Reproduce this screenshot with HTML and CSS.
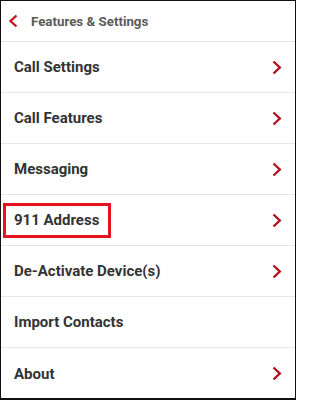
FILE: index.html
```html
<!DOCTYPE html>
<html>
<head>
<meta charset="utf-8">
<link rel="stylesheet" href="styles.css">
</head>
<body>
<div class="screen">
  <header class="header">
    <svg class="back" width="10" height="14" viewBox="0 0 10 14"><path d="M8.5 1.5 L2.5 7 L8.5 12.5" fill="none" stroke="#c0141e" stroke-width="2.3"/></svg>
    <span class="title">Features &amp; Settings</span>
  </header>
  <ul class="list">
    <li class="row"><span class="label">Call Settings</span><svg class="chev" width="10" height="15" viewBox="0 0 10 15"><path d="M1.5 1.5 L7.8 7.5 L1.5 13.5" fill="none" stroke="#b3121b" stroke-width="2.4"/></svg></li>
    <li class="row"><span class="label">Call Features</span><svg class="chev" width="10" height="15" viewBox="0 0 10 15"><path d="M1.5 1.5 L7.8 7.5 L1.5 13.5" fill="none" stroke="#b3121b" stroke-width="2.4"/></svg></li>
    <li class="row"><span class="label">Messaging</span><svg class="chev" width="10" height="15" viewBox="0 0 10 15"><path d="M1.5 1.5 L7.8 7.5 L1.5 13.5" fill="none" stroke="#b3121b" stroke-width="2.4"/></svg></li>
    <li class="row"><span class="label">911 Address</span><span class="box"></span><svg class="chev" width="10" height="15" viewBox="0 0 10 15"><path d="M1.5 1.5 L7.8 7.5 L1.5 13.5" fill="none" stroke="#b3121b" stroke-width="2.4"/></svg></li>
    <li class="row"><span class="label">De-Activate Device(s)</span><svg class="chev" width="10" height="15" viewBox="0 0 10 15"><path d="M1.5 1.5 L7.8 7.5 L1.5 13.5" fill="none" stroke="#b3121b" stroke-width="2.4"/></svg></li>
    <li class="row"><span class="label">Import Contacts</span></li>
    <li class="row last"><span class="label">About</span><svg class="chev" width="10" height="15" viewBox="0 0 10 15"><path d="M1.5 1.5 L7.8 7.5 L1.5 13.5" fill="none" stroke="#b3121b" stroke-width="2.4"/></svg></li>
  </ul>
</div>
</body>
</html>
```
FILE: styles.css
```css
html, body {
  margin: 0;
  padding: 0;
  background: #fff;
}
.screen {
  width: 296px;
  height: 400px;
  box-sizing: border-box;
  border: 1px solid #111;
  border-bottom-width: 2px;
  font-family: Roboto, "Liberation Sans", sans-serif;
  overflow: hidden;
  background: #fff;
}
.header {
  height: 41px;
  display: flex;
  align-items: center;
  padding-left: 7px;
  border-bottom: 1px solid #e4e4e4;
  box-sizing: border-box;
}
.back {
  display: block;
  margin-right: 13px;
}
.title {
  font-size: 13.3px;
  font-weight: 700;
  color: #5a5a5a;
}
.list {
  list-style: none;
  margin: 0;
  padding: 0;
}
.row {
  position: relative;
  height: 51px;
  box-sizing: border-box;
  border-bottom: 1px solid #e6e6e6;
  display: flex;
  align-items: center;
  justify-content: space-between;
  padding: 0 13px 0 13px;
}
.row.last {
  border-bottom: none;
}
.label {
  font-size: 15px;
  font-weight: 700;
  color: #333;
}
.chev {
  display: block;
}
.box {
  position: absolute;
  left: 2px;
  top: 8px;
  width: 108px;
  height: 35px;
  box-sizing: border-box;
  border: 3px solid #e3141e;
}
```
